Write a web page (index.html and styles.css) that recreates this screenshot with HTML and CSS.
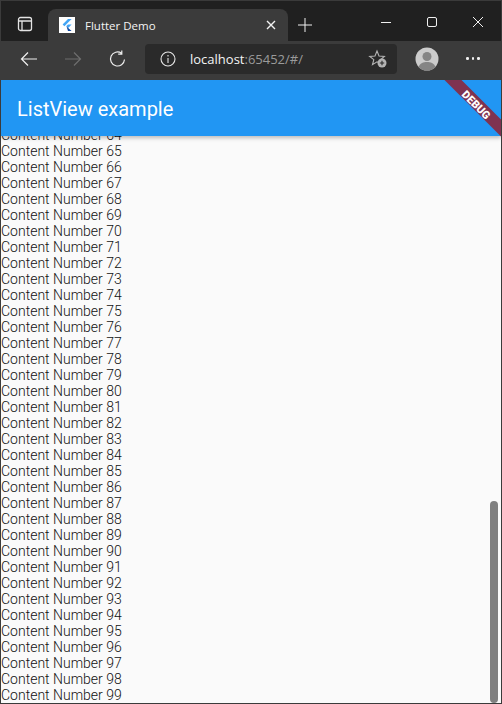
FILE: index.html
```html
<!DOCTYPE html>
<html lang="en">
<head>
    <meta charset="UTF-8">
    <meta name="viewport" content="width=device-width, initial-scale=1.0">
    <title>Flutter Demo</title>
    <link rel="stylesheet" href="styles.css">
</head>
<body>
    <div class="window">
        <div class="tabstrip">
            <div class="workspace-btn">
                <svg width="16" height="16" viewBox="0 0 16 16" fill="none" stroke="#e4e4e4" stroke-width="1.3">
                    <rect x="1.5" y="1.5" width="13" height="13" rx="2"></rect>
                    <path d="M1.5 5h13M5 5v9.5"></path>
                </svg>
            </div>
            <div class="tab">
                <div class="favicon">
                    <svg width="16" height="16" viewBox="0 0 16 16">
                        <path d="M9 2h3.6L5.4 9.2 3.6 7.4z" fill="#42a5f5"></path>
                        <path d="M9 7.4h3.6L9.2 10.9l-1.8-1.8z" fill="#42a5f5"></path>
                        <path d="M7.4 9.1l1.8 1.8 3.4 3.1H9z" fill="#0d47a1"></path>
                    </svg>
                </div>
                <span class="tab-title">Flutter Demo</span>
                <svg class="tab-close" width="10" height="10" viewBox="0 0 10 10" stroke="#f2f2f2" stroke-width="1.4">
                    <path d="M1 1l8 8M9 1l-8 8"></path>
                </svg>
            </div>
            <svg class="new-tab" width="14" height="14" viewBox="0 0 14 14" stroke="#f0f0f0" stroke-width="1">
                <path d="M7 0v14M0 7h14"></path>
            </svg>
            <div class="window-controls">
                <svg width="10" height="10" viewBox="0 0 10 10" stroke="#f0f0f0" stroke-width="1"><path d="M0 5.5h10"></path></svg>
                <svg width="10" height="10" viewBox="0 0 10 10" fill="none" stroke="#f0f0f0" stroke-width="1"><rect x="0.5" y="0.5" width="9" height="9" rx="1.5"></rect></svg>
                <svg width="10" height="10" viewBox="0 0 10 10" stroke="#f0f0f0" stroke-width="1"><path d="M0 0l10 10M10 0L0 10"></path></svg>
            </div>
        </div>
        <div class="toolbar">
            <svg class="nav-icon" width="18" height="16" viewBox="0 0 18 16" fill="none" stroke="#f0f0f0" stroke-width="1.2"><path d="M17 8H1.5M8 1.5L1.5 8 8 14.5"></path></svg>
            <svg class="nav-icon forward" width="18" height="16" viewBox="0 0 18 16" fill="none" stroke="#6e6e6e" stroke-width="1.2"><path d="M1 8h15.5M10 1.5L16.5 8 10 14.5"></path></svg>
            <svg class="nav-icon" width="18" height="18" viewBox="0 0 18 18" fill="none" stroke="#f0f0f0" stroke-width="1.2"><path d="M15.5 9.5A7 7 0 1 1 12.5 3.2M12.8 0.5v3.6H9.2"></path></svg>
            <div class="address">
                <svg class="info-icon" width="16" height="16" viewBox="0 0 16 16" fill="none" stroke="#e6e6e6" stroke-width="1.1">
                    <circle cx="8" cy="8" r="7"></circle>
                    <path d="M8 7v5M8 4v1.4"></path>
                </svg>
                <span class="url"><span class="host">localhost</span>:65452/#/</span>
                <svg class="fav-icon" width="20" height="20" viewBox="0 0 20 20">
                    <path d="M9 2l2 5 5.4.4-4.1 3.5 1.2 4.2L9 12.8 4.5 15.6l1.3-5L1.7 7.4 7 7z" fill="none" stroke="#b4b4b4" stroke-width="1.1"></path>
                    <circle cx="14" cy="14" r="4.5" fill="#b4b4b4"></circle>
                    <path d="M14 11.8v4.4M11.8 14h4.4" stroke="#2a2a2a" stroke-width="1.1"></path>
                </svg>
            </div>
            <div class="avatar">
                <svg width="24" height="24" viewBox="0 0 24 24">
                    <circle cx="12" cy="12" r="11.5" fill="#cccccc"></circle>
                    <circle cx="12" cy="9.5" r="4.5" fill="#858585"></circle>
                    <path d="M3.5 20c1.5-4 5-5 8.5-5s7 1 8.5 5a11.5 11.5 0 0 1-17 0z" fill="#858585"></path>
                </svg>
            </div>
            <div class="more"><i></i><i></i><i></i></div>
        </div>
        <div class="page">
            <header class="app-bar">ListView example</header>
            <div class="list">
                <div class="row">Content Number 64</div>
                <div class="row">Content Number 65</div>
                <div class="row">Content Number 66</div>
                <div class="row">Content Number 67</div>
                <div class="row">Content Number 68</div>
                <div class="row">Content Number 69</div>
                <div class="row">Content Number 70</div>
                <div class="row">Content Number 71</div>
                <div class="row">Content Number 72</div>
                <div class="row">Content Number 73</div>
                <div class="row">Content Number 74</div>
                <div class="row">Content Number 75</div>
                <div class="row">Content Number 76</div>
                <div class="row">Content Number 77</div>
                <div class="row">Content Number 78</div>
                <div class="row">Content Number 79</div>
                <div class="row">Content Number 80</div>
                <div class="row">Content Number 81</div>
                <div class="row">Content Number 82</div>
                <div class="row">Content Number 83</div>
                <div class="row">Content Number 84</div>
                <div class="row">Content Number 85</div>
                <div class="row">Content Number 86</div>
                <div class="row">Content Number 87</div>
                <div class="row">Content Number 88</div>
                <div class="row">Content Number 89</div>
                <div class="row">Content Number 90</div>
                <div class="row">Content Number 91</div>
                <div class="row">Content Number 92</div>
                <div class="row">Content Number 93</div>
                <div class="row">Content Number 94</div>
                <div class="row">Content Number 95</div>
                <div class="row">Content Number 96</div>
                <div class="row">Content Number 97</div>
                <div class="row">Content Number 98</div>
                <div class="row">Content Number 99</div>
            </div>
            <div class="scroll-thumb"></div>
            <div class="debug-banner"><span>DEBUG</span></div>
        </div>
    </div>
</body>
</html>
```

FILE: styles.css
```css
html, body {
    margin: 0;
    height: 100%;
    overflow: hidden;
}

body {
    font-family: 'Roboto', 'Liberation Sans', sans-serif;
    background-color: #2b2b2b;
}

.window {
    display: flex;
    flex-direction: column;
    height: 703px;
    padding: 0 1px 1px;
    background-color: #3b3b3b;
}

.tabstrip {
    display: flex;
    align-items: flex-end;
    height: 41px;
    flex-shrink: 0;
    background-color: #202020;
    border-top: 1px solid #3a3a3a;
    box-sizing: border-box;
}

.workspace-btn {
    display: flex;
    align-items: center;
    justify-content: center;
    width: 47px;
    height: 32px;
    padding-bottom: 2px;
    box-sizing: border-box;
}

.tab {
    display: flex;
    align-items: center;
    width: 240px;
    height: 32px;
    padding: 0 12px 0 11px;
    box-sizing: border-box;
    background-color: #3b3b3b;
    border-radius: 8px 8px 0 0;
}

.favicon {
    display: flex;
    background-color: #fff;
}

.tab-title {
    flex: 1;
    margin-left: 10px;
    font-family: 'Open Sans', 'Liberation Sans', sans-serif;
    font-size: 11.5px;
    color: #f4f4f4;
}

.new-tab {
    margin: 0 0 9px 10px;
}

.window-controls {
    display: flex;
    gap: 36px;
    margin: 0 0 14px auto;
    padding-right: 18px;
}

.toolbar {
    display: flex;
    align-items: center;
    height: 35px;
    flex-shrink: 0;
    padding-left: 19px;
    background-color: #3b3b3b;
}

.nav-icon {
    margin-right: 26px;
}

.nav-icon.forward {
    margin-right: 27px;
}

.address {
    display: flex;
    align-items: center;
    width: 252px;
    height: 30px;
    margin-left: -8px;
    padding: 0 9px 0 15px;
    box-sizing: border-box;
    background-color: #2a2a2a;
    border-radius: 4px;
}

.url {
    flex: 1;
    margin-left: 14px;
    font-family: 'Open Sans', 'Liberation Sans', sans-serif;
    font-size: 13px;
    color: #9a9a9a;
}

.host {
    color: #f4f4f4;
}

.avatar {
    display: flex;
    margin-left: 18px;
}

.more {
    display: flex;
    gap: 3px;
    margin-left: 27px;
}

.more i {
    width: 2.5px;
    height: 2.5px;
    border-radius: 50%;
    background-color: #f0f0f0;
}

.page {
    position: relative;
    display: flex;
    flex-direction: column;
    flex: 1;
    min-height: 0;
    margin-top: 4px;
    overflow: hidden;
    background-color: #fafafa;
}

.app-bar {
    position: relative;
    z-index: 1;
    display: flex;
    align-items: center;
    height: 56px;
    flex-shrink: 0;
    padding: 2px 0 0 16px;
    box-sizing: border-box;
    font-size: 20px;
    color: #fff;
    background-color: #2196f3;
    box-shadow: 0 2px 4px rgba(0, 0, 0, 0.25);
}

.list {
    display: flex;
    flex-direction: column;
    justify-content: flex-end;
    flex: 1;
    min-height: 0;
    overflow: hidden;
}

.row {
    flex-shrink: 0;
    height: 16px;
    font-size: 14px;
    font-weight: 300;
    line-height: 16px;
    color: #111;
}

.scroll-thumb {
    position: absolute;
    right: 3px;
    bottom: 0;
    width: 8px;
    height: 202px;
    border-radius: 4px;
    background-color: #808080;
}

/* corner ribbon, sits over the app bar */
.debug-banner {
    position: absolute;
    z-index: 2;
    top: 18px;
    right: -26px;
    width: 100px;
    height: 12px;
    text-align: center;
    line-height: 12px;
    background-color: #7f3350;
    transform: rotate(45deg);
}

.debug-banner span {
    font-size: 11px;
    font-weight: 900;
    color: #fff;
}
```
